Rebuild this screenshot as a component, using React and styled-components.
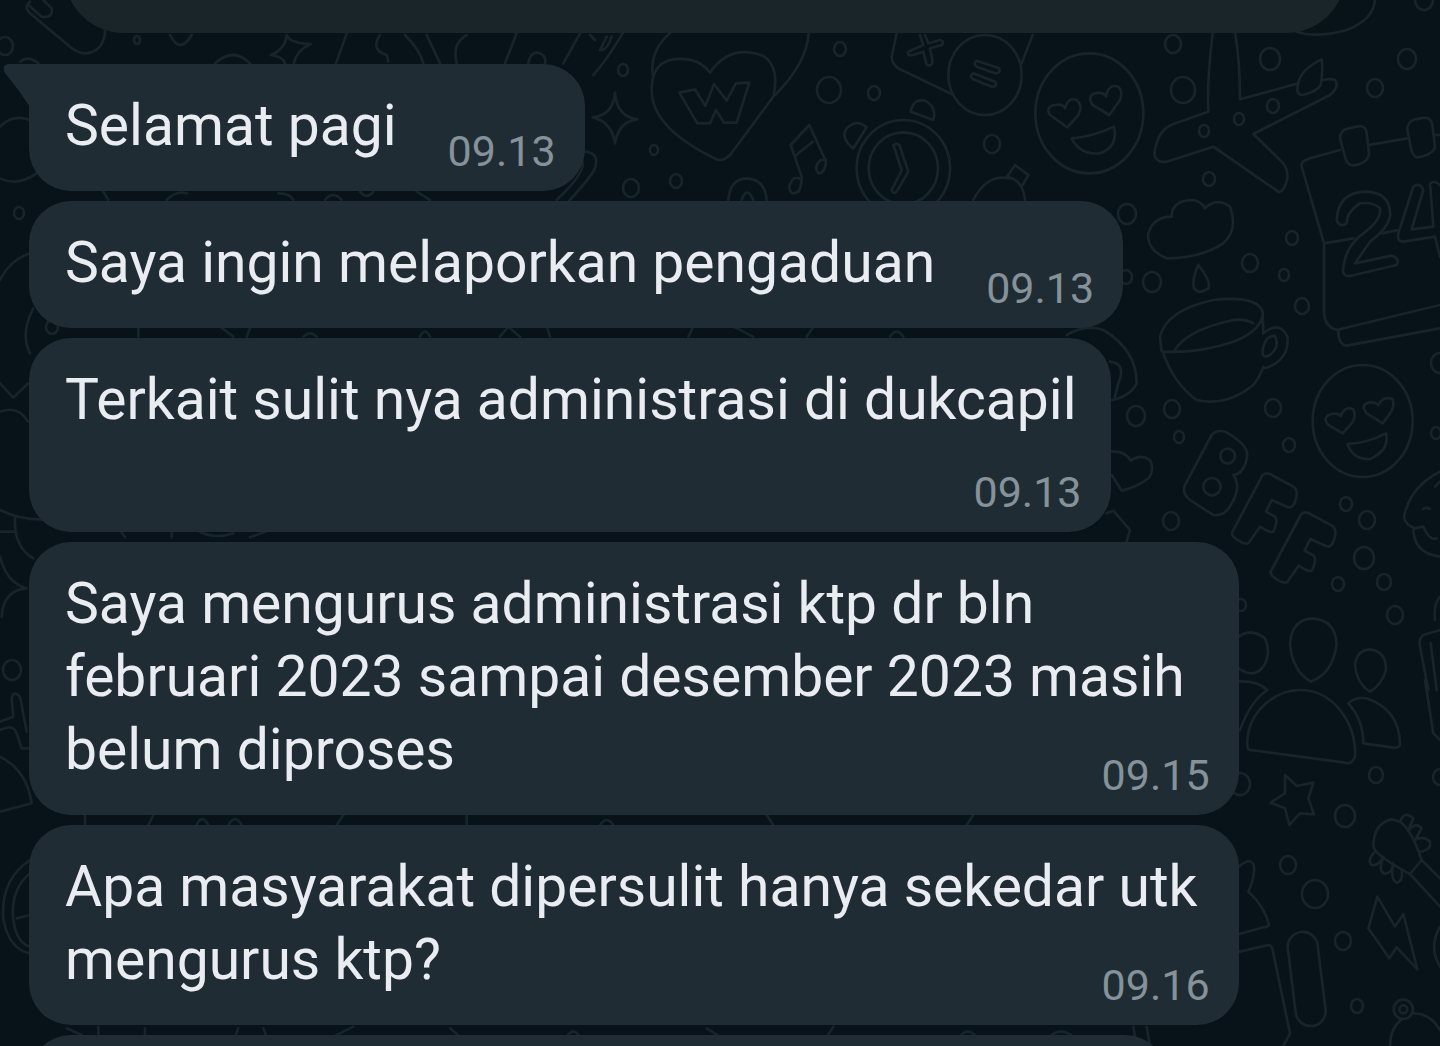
import React from 'react';
import styled, { createGlobalStyle } from 'styled-components';

const GlobalStyle = createGlobalStyle`
  * {
    box-sizing: border-box;
  }
  body {
    margin: 0;
    background: #071318;
  }
`;

const Page = styled.main`
  position: relative;
  height: 100vh;
  overflow: hidden;
  font-family: Roboto, 'Liberation Sans', sans-serif;
  background: #071318;
`;

const Wallpaper = styled.svg`
  position: absolute;
  top: 0;
  left: 0;
  fill: none;
  stroke: #172429;
  stroke-width: 8;
  stroke-linecap: round;
  stroke-linejoin: round;
`;

const Thread = styled.div`
  position: relative;
  display: flex;
  flex-direction: column;
  align-items: flex-start;
  gap: 10px;
`;

const PreviousCard = styled.div`
  align-self: stretch;
  height: 120px;
  margin: -87px 94px 21px 64px;
  border-radius: 80px;
  background: #1a252a;
`;

const Bubble = styled.article`
  position: relative;
  display: flex;
  align-items: flex-end;
  gap: 46px;
  margin-left: 29px;
  padding: 25px 29px 15px 36px;
  border-radius: ${props => (props.$first ? '0 42px 42px 42px' : '42px')};
  background: #202c33;
`;

const StackedBubble = styled(Bubble)`
  flex-direction: column;
  gap: 17px;
`;

const LongBubble = styled(Bubble)`
  display: block;
  width: 84%;
`;

const NextBubble = styled.div`
  width: 79%;
  height: 120px;
  margin-left: 29px;
  border-radius: 42px;
  background: #202c33;
`;

const Tail = styled.svg`
  position: absolute;
  top: 0;
  left: -26px;
  fill: #202c33;
`;

const Text = styled.p`
  margin: 0;
  padding: 0 5px 14px 0;
  color: #e9edf2;
  font-size: 57px;
  line-height: 73px;
`;

const LongText = styled(Text)`
  display: flow-root;
  padding: 0;
`;

const Time = styled.time`
  color: #85929a;
  font-size: 43px;
  line-height: 50px;

  ${LongText} & {
    float: right;
    margin-top: 37px;
  }
`;

const dots = [
  [137, 40, 4], [5, 46, 9], [19, 213, 6], [12, 670, 10], [52, 327, 7],
  [623, 70, 6], [654, 150, 5], [631, 188, 9], [676, 181, 7], [840, 49, 7],
  [829, 90, 13], [874, 93, 7], [992, 144, 9], [1173, 44, 9], [1183, 90, 13],
  [1270, 59, 11], [1273, 106, 7], [1239, 119, 6], [1204, 131, 6], [1209, 179, 7],
  [1375, 88, 9], [1407, 59, 10], [1424, 0, 10], [1127, 214, 10], [1126, 277, 7],
  [1152, 282, 10], [1250, 263, 9], [1284, 275, 6], [1292, 238, 7], [1302, 306, 8],
  [1136, 416, 10], [1172, 409, 9], [1179, 437, 6], [1273, 408, 9], [1289, 445, 7],
  [1171, 521, 9], [1346, 504, 7], [1367, 520, 9], [1364, 558, 11], [1384, 582, 8],
  [1338, 584, 7], [1395, 615, 9], [1241, 605, 6], [1436, 433, 6], [1440, 363, 10],
  [1376, 775, 8], [1240, 784, 11], [1345, 816, 11], [1288, 865, 9], [1315, 894, 14],
  [1343, 941, 9], [1357, 1006, 7], [1440, 777, 8],
];

const Doodles = () => (
  <Wallpaper width="1440" height="1046" viewBox="0 0 4320 3138" aria-hidden="true">
    {dots.map(([x, y, r]) => (
      <ellipse key={`${x}-${y}`} cx={x * 3} cy={y * 3} rx={r * 3 - 3} ry={r * 3} />
    ))}

    {/* left edge and the strip under the card */}
    <path d="M90 5Q70 20 90 40L210 140Q260 180 300 140Q330 90 300 60L230 0M85 15L125 50Q160 55 155 25L130 0" />
    <path d="M60 185Q85 165 115 190M510 105Q540 165 575 105M645 190Q700 140 750 190" />
    <path d="M860 105Q870 130 932 132Q890 150 882 190M860 105Q855 150 812 165Q850 170 855 190M1040 100L1008 190M1140 105Q1110 150 1160 165L1165 185M1215 105Q1260 150 1270 190M1280 105L1320 190M1400 105Q1355 130 1370 190" />
    <path d="M0 380Q40 340 90 360M0 535Q50 560 110 520M0 840Q30 780 90 760M100 925Q60 1000 90 1060M0 1150L40 1193L84 1150M0 1235Q55 1215 84 1265" />
    <path d="M310 575l15 25M500 600Q530 570 560 580M835 580Q870 580 880 600M975 600Q1000 570 1025 600M1080 575Q1100 600 1120 575M1250 575L1290 600" />
    <path d="M415 980V1010M660 980L700 1010M740 1010L750 985M910 1010Q930 990 950 1010M1260 1010Q1275 980 1290 1010M1500 1010L1525 980L1560 1010M1640 980L1650 1010M2065 1010L2080 980M2200 980L2260 1010M2420 1010L2440 980M2670 1010Q2690 980 2710 1010" />
    <path d="M0 1530Q60 1560 130 1558M45 1550Q40 1640 100 1675M0 1595H45M0 1670Q20 1750 80 1765Q10 1770 5 1850" />
    <path d="M80 2195L60 2090Q40 2070 35 2095L40 2150L0 2165M0 2190Q40 2170 50 2200L65 2245H85M0 2270Q80 2310 95 2410L0 2435" />
    <path d="M90 2580Q0 2640 10 2760Q30 2850 90 2860M90 2620Q30 2670 40 2760Q50 2830 90 2840M50 2755L90 2745" />
    <path d="M360 1590L375 1612M515 1590V1612M590 1590Q640 1620 700 1600M750 1612L810 1590M255 2445V2475M445 2475L460 2445M590 2475Q605 2440 625 2475M685 2475Q705 2440 725 2475M1010 2475L1030 2445M1400 2445V2475M1800 2475Q1820 2445 1840 2475M2300 2445L2320 2475M2900 2475L2920 2445" />
    <path d="M200 3085L245 3105M295 3080V3110M435 3085V3110M705 3110L715 3085M790 3085L800 3110M1000 3110L1060 3080M1350 3085L1380 3110M1700 3110Q1720 3080 1740 3110M2120 3085L2160 3110M2500 3080L2480 3110M2880 3110Q2900 3080 2930 3110M3150 3110Q3180 3080 3220 3110M3400 3080L3410 3138M3440 3080L3450 3138" />
    <path d="M1550 100L1515 190M1740 100L1690 190M1868 100Q1820 180 1780 225M1585 190Q1590 155 1615 158Q1640 165 1635 190M1770 105L1785 120M1820 110L1800 150Q1820 155 1835 110" />
    <path d="M1750 455Q1800 455 1785 505Q1770 535 1705 605M1745 480Q1765 510 1670 600" />

    {/* heart balloon, sparkle, notes, clock, keys */}
    <g transform="translate(1740 0)">
      <path d="M105 278Q110 350 172 358Q115 365 105 430Q95 365 38 352Q100 345 105 278Z" />
      <path d="M390 218Q350 165 270 180Q215 195 215 270C215 370 330 440 410 478Q430 485 450 465L580 290Q600 200 550 168Q450 130 390 218Z" />
      <path d="M270 100Q210 150 218 225M686 100Q680 190 585 285" />
      <path d="M298 278L345 268L376 318L402 252L440 302L468 250L508 248L470 368H432L408 330L390 370H352Z" />
      <path d="M665 540Q640 520 628 560Q630 590 655 575Q665 560 665 530L632 435L688 375L738 485Q735 520 715 520Q700 500 722 480L738 480M645 468L698 425" />
      <ellipse cx="970" cy="505" rx="140" ry="145" />
      <ellipse cx="970" cy="505" rx="104" ry="108" />
      <path d="M940 435L965 510L935 570Q940 585 950 575L985 515L958 435Q948 428 940 435Z" />
      <path d="M992 335Q1000 295 1035 302Q1070 320 1060 360ZM820 445Q780 415 800 385Q830 355 860 382Z" />
      <path d="M445 600Q450 535 503 535Q555 540 560 600M485 600Q500 555 520 600M1180 600Q1220 520 1290 535" />
      <path d="M950 100L935 170Q935 190 955 205L1115 282" />
      <path d="M1020 105L1030 135L985 155Q980 170 1000 165L1030 155L1040 195Q1055 200 1058 185L1050 145L1085 135Q1095 125 1080 120L1045 130L1035 105" />
      <ellipse cx="1215" cy="225" rx="110" ry="120" />
      <path d="M1190 182Q1178 192 1190 200L1245 220Q1262 220 1258 205ZM1180 220Q1165 228 1180 238L1235 260Q1255 260 1245 245Z" />
    </g>

    {/* smiley, plane, calendar, cloud, cup */}
    <g transform="translate(3000 0)">
      <path d="M98 105L65 190M890 95Q950 115 1040 90Q1120 60 1125 0" />
      <ellipse cx="268" cy="340" rx="162" ry="180" />
      <path d="M202 382L150 345Q135 320 165 315Q190 310 195 325Q205 290 230 300Q250 315 235 345ZM328 345L278 315Q260 290 285 280Q310 275 318 290Q325 250 355 260Q370 275 360 300ZM215 415Q280 410 342 380Q355 440 300 460Q240 465 215 415Z" />
      <path d="M638 100Q620 250 625 335L520 372Q470 390 463 465Q470 490 500 485L640 440L835 575Q850 580 862 535Q865 500 840 480L760 402L990 285Q1020 260 1005 240Q990 235 970 240M705 100Q720 180 720 298L895 250M908 285Q885 285 895 250Q900 210 965 178Q970 210 962 255Q950 275 908 285Z" />
      <path d="M20 530Q70 540 75 600M25 525L45 495L85 525L68 555M515 650Q515 600 580 600Q605 605 615 625Q650 590 690 620Q715 690 670 730Q600 775 500 775Q440 750 445 700Q460 650 515 650ZM595 795Q575 840 582 865Q600 885 625 865Q635 845 595 795Z" />
      <path d="M1020 450L930 475Q900 485 905 500L972 730V940Q975 980 1010 990M1105 435L1222 415M1305 405H1320M972 730L1060 715M1145 700L1195 690M1010 990L1320 915M1015 990Q1015 1035 1040 1037L1320 985" />
      <path d="M1045 385L1080 378Q1098 380 1100 400L1107 460Q1105 490 1060 496Q1040 495 1035 470L1020 415Q1020 390 1045 385ZM1245 358L1275 353Q1295 355 1297 375L1305 440Q1300 465 1250 472Q1235 465 1232 440L1222 390Q1222 365 1245 358Z" />
      <path d="M1010 660Q1015 575 1100 575Q1175 580 1170 650Q1160 690 1110 725L1065 790L1175 767Q1200 775 1190 795L1050 828Q1025 830 1030 805Q1035 740 1090 700Q1145 660 1140 625Q1120 605 1080 610Q1040 635 1040 670Q1020 685 1010 660ZM1195 700L1240 560Q1260 545 1270 570L1235 688L1300 680L1290 550Q1305 540 1320 555M1195 700Q1190 725 1210 725L1305 710L1320 770" />
      <path d="M480 1010Q500 930 640 900Q770 885 788 935Q790 990 700 1025Q600 1060 485 1055ZM525 1050Q560 990 700 960Q735 955 760 970M488 1055Q520 1150 590 1200Q680 1220 760 1155Q780 1130 790 1100M788 940L790 1000Q840 960 862 1010Q870 1080 795 1105M790 1040Q800 1005 825 1008Q840 1040 810 1065Q780 1080 790 1040Z" />
      <path d="M200 1005Q260 970 310 990Q410 1050 410 1150Q390 1190 335 1200M330 1085Q380 1090 355 1150L345 1190" />
    </g>

    {/* second smiley, letters, hearts, people */}
    <g transform="translate(3300 1020)">
      <ellipse cx="788" cy="243" rx="150" ry="168" />
      <path d="M728 280L685 255Q665 230 695 222Q715 218 722 228Q735 195 760 208Q770 230 755 250ZM848 250L800 220Q780 195 805 188Q825 185 835 195Q850 165 878 178Q885 200 870 220ZM742 312Q800 310 858 280Q870 330 810 357Q760 360 742 312Z" />
      <path d="M25 335Q75 330 92 362Q120 340 150 360Q165 390 145 415Q115 440 65 452L35 405M20 520L40 512L90 570L80 605" />
      <path d="M335 285Q350 268 375 275Q440 310 442 345Q435 400 400 405Q425 440 395 490Q375 530 340 525L270 480Q245 460 255 435Z" />
      <circle cx="383" cy="348" r="22" />
      <circle cx="336" cy="440" r="26" />
      <path id="letter-f" d="M488 405Q500 395 515 405L580 440Q595 450 588 475Q580 510 560 500L515 480L498 515L525 530Q535 540 520 575Q510 580 480 560L445 610Q430 615 400 590Q392 580 400 570Z" />
      <use href="#letter-f" transform="translate(116 117)" />
      <path d="M1020 395Q930 440 912 530Q915 555 945 565L970 560Q990 605 1010 595M940 565Q940 640 1020 650M970 507Q980 500 990 507M1005 440L1020 425M1020 770Q1000 790 1005 840M1020 870L970 885Q955 895 960 920L985 1050M992 910L1010 1050" />
      <path d="M570 910Q575 840 637 835Q705 840 710 910Q700 1000 632 1025Q575 990 570 910ZM410 895Q450 860 495 895Q515 940 490 980Q460 1020 410 980M765 975Q770 930 810 928Q860 935 858 990Q845 1035 810 1055Q770 1030 765 975Z" />
    </g>

    {/* shoulders, star, guitar, bolt, phone */}
    <g transform="translate(3660 2040)">
      <path d="M50 5Q110 0 142 30Q90 65 60 150M90 210Q80 210 82 185C85 90 170 30 240 30C340 30 410 130 405 230Q395 255 375 248ZM385 70Q405 50 440 55Q540 90 540 195Q535 205 520 203L430 190Q430 120 385 70ZM615 0L640 160L660 180" />
      <path d="M195 285L230 318L280 308L265 355L282 403L240 400L208 435L195 385L152 368L195 340Z" />
      <path d="M515 418Q460 430 460 500Q470 530 570 582L605 540Q575 450 540 425ZM605 540L660 595M570 582L660 680" />
      <path d="M540 425Q555 390 580 415L565 450Q590 425 605 445L585 480Q610 465 630 485Q635 510 600 515M465 515Q440 540 455 555Q475 560 490 530Q475 570 490 580Q515 585 520 550Q510 600 530 608Q550 605 545 570" />
      <path d="M472 650L525 740L550 702L592 868L530 802L508 835L445 745Z" />
      <path d="M50 565Q95 525 102 560Q105 590 85 635Q135 680 147 735Q145 740 130 742L50 764M50 817L145 795Q155 795 158 810L210 1060L190 1098" />
      <rect x="215" y="755" width="90" height="284" rx="45" transform="rotate(-7 260 897)" />
      <path d="M510 1098Q510 1045 545 1018M582 1000Q630 1000 660 1050M660 740Q625 800 660 860" />
      <circle cx="550" cy="988" r="29" />
      <circle cx="550" cy="988" r="12" />
    </g>
  </Wallpaper>
);

const App = () => (
  <>
    <GlobalStyle />
    <Page>
      <Doodles />
      <Thread>
        <PreviousCard />
        <Bubble $first>
          <Tail width="27" height="44" viewBox="0 0 27 44" aria-hidden="true">
            <path d="M27 0H5Q-2 2 2 9Q16 26 27 43Z" />
          </Tail>
          <Text>Selamat pagi</Text>
          <Time>09.13</Time>
        </Bubble>
        <Bubble>
          <Text>Saya ingin melaporkan pengaduan</Text>
          <Time>09.13</Time>
        </Bubble>
        <StackedBubble>
          <Text>Terkait sulit nya administrasi di dukcapil</Text>
          <Time>09.13</Time>
        </StackedBubble>
        <LongBubble>
          <LongText>
            Saya mengurus administrasi ktp dr bln februari 2023 sampai desember 2023 masih belum
            diproses
            <Time>09.15</Time>
          </LongText>
        </LongBubble>
        <LongBubble>
          <LongText>
            Apa masyarakat dipersulit hanya sekedar utk mengurus ktp?
            <Time>09.16</Time>
          </LongText>
        </LongBubble>
        <NextBubble />
      </Thread>
    </Page>
  </>
);

export default App;
